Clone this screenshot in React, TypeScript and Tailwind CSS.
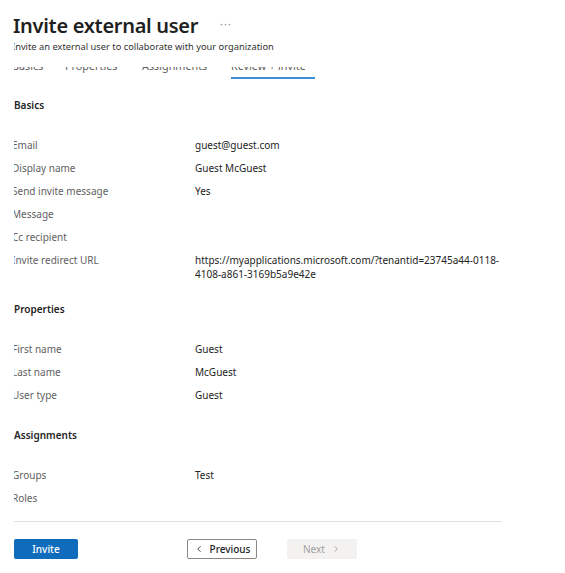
import { ChevronLeft, ChevronRight } from 'lucide-react'

// ── Data ──────────────────────────────────────────────────────────────────────

type Row = { label: string; value?: string }

const sections: { title: string; rows: Row[]; gap: string }[] = [
  {
    title: 'Basics',
    gap: 'mt-[19px]',
    rows: [
      { label: 'Email', value: 'guest@guest.com' },
      { label: 'Display name', value: 'Guest McGuest' },
      { label: 'Send invite message', value: 'Yes' },
      { label: 'Message' },
      { label: 'Cc recipient' },
      {
        label: 'Invite redirect URL',
        value: 'https://myapplications.microsoft.com/?tenantid=23745a44-0118-4108-a861-3169b5a9e42e',
      },
    ],
  },
  {
    title: 'Properties',
    gap: 'mt-[16px]',
    rows: [
      { label: 'First name', value: 'Guest' },
      { label: 'Last name', value: 'McGuest' },
      { label: 'User type', value: 'Guest' },
    ],
  },
  {
    title: 'Assignments',
    gap: 'mt-[21px]',
    rows: [{ label: 'Groups', value: 'Test' }, { label: 'Roles' }],
  },
]

const tabs = [
  { label: 'Basics', cls: '-ml-[2px] w-[53px]' },
  { label: 'Properties', cls: 'w-[77px]' },
  { label: 'Assignments', cls: 'w-[89px]' },
  { label: 'Review + invite', cls: '' },
]

// ── Page ──────────────────────────────────────────────────────────────────────

export default function App() {
  return (
    <div className="w-[565px] h-[573px] bg-white overflow-hidden font-['Noto_Sans',sans-serif] text-[#242424]">
      {/* Header */}
      <div className="pt-[11px] pl-[13px] flex items-center gap-[22px]">
        <h1 className="text-[20px] leading-[30px] font-semibold tracking-[-0.3px] text-[#1f1f1f]">
          Invite external user
        </h1>
        <span className="text-[11px] text-[#8a8886] tracking-[1px] -mt-[4px]">···</span>
      </div>

      <div className="ml-[14px] w-[488px] overflow-hidden">
        <p className="-mt-[1px] -ml-[2px] text-[9.3px] leading-[14px] text-[#323130] whitespace-nowrap">
          Invite an external user to collaborate with your organization
        </p>

        <div className="mt-[13px] flex text-[10.8px] text-[#605e5c]">
          {tabs.map((t, i) => (
            <div key={t.label} className={t.cls}>
              <div className="h-[6px] overflow-hidden">
                <div className="-mt-[9px] leading-[16px] whitespace-nowrap">{t.label}</div>
              </div>
              <div className={i === 3 ? 'mt-[4px] h-[2px] w-[84px] bg-[#3a8fd9]' : 'mt-[4px] h-[2px]'} />
            </div>
          ))}
        </div>

        {/* Sections */}
        {sections.map((s) => (
          <div key={s.title} className={s.gap}>
            <h2 className="text-[10px] leading-[14px] font-semibold text-[#242424]">{s.title}</h2>
            <div className="mt-[22px]">
              {s.rows.map((r) => (
                <div key={r.label} className="flex pt-[4px] pb-[5px] text-[10px] leading-[14px]">
                  <div className="-ml-[2px] w-[183px] shrink-0 text-[#616161]">{r.label}</div>
                  <div className="w-[307px] shrink-0 break-words text-[#242424]">{r.value}</div>
                </div>
              ))}
            </div>
          </div>
        ))}

        <div className="mt-[11px] h-px bg-[#e1dfdd]" />

        {/* Footer buttons */}
        <div className="mt-[17px] flex items-center text-[10px]">
          <button className="w-[64px] h-[20px] rounded-[2px] bg-[#0f6cbd] text-white font-medium">Invite</button>
          <button className="ml-[109px] w-[70px] h-[20px] rounded-[2px] border border-[#8a8886] bg-white text-[#242424] font-medium flex items-center justify-center gap-[6px]">
            <ChevronLeft className="w-[10px] h-[10px]" strokeWidth={2} />
            Previous
          </button>
          <button className="ml-[30px] w-[70px] h-[20px] rounded-[2px] bg-[#f3f2f1] text-[#a19f9d] flex items-center justify-center gap-[6px]">
            Next
            <ChevronRight className="w-[10px] h-[10px]" strokeWidth={2} />
          </button>
        </div>
      </div>
    </div>
  )
}
